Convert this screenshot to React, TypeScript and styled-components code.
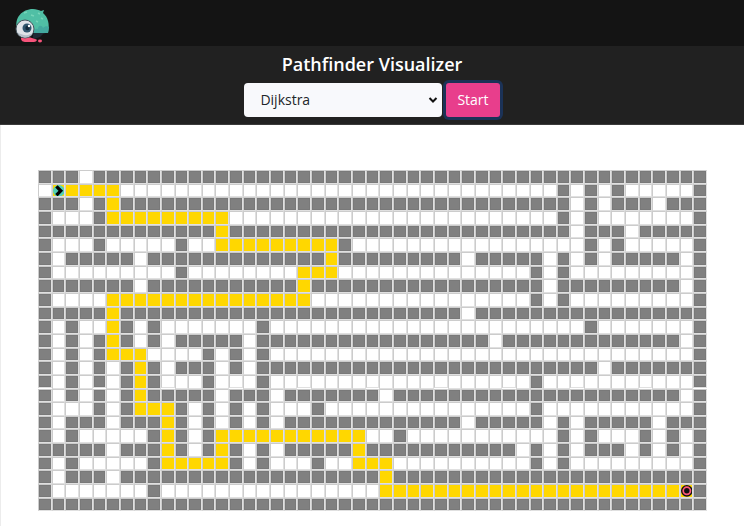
import React from "react";
import styled, { createGlobalStyle } from "styled-components";

const GlobalStyle = createGlobalStyle`
  * { box-sizing: border-box; }
  body {
    margin: 0;
    background: #fff;
    font-family: "Open Sans", "Noto Sans", sans-serif;
  }
`;

type CellKind = "#" | "." | "*" | "S" | "E";

/* Each row is a list of runs: a cell kind followed by how many cells it spans. */
const MAZE = [
  "#3 .1 #45",
  ".1 S1 *4 .32 #1 .1 #1 .1 #1 .5 #1",
  "#3 .1 #1 *1 #33 .1 #1 .1 #3 .1 #3",
  "#1 .3 #1 *9 .24 #1 .1 #1 .7 #1",
  "#13 *1 #25 .1 #3 .1 #5",
  "#1 .3 #1 .5 #1 .2 *9 #1 .17 #1 .1 #1 .5 #1",
  "#1 .1 #5 .1 #13 *1 #9 .1 #5 .1 #1 .1 #1 .1 #5 .1 #1",
  "#1 .9 #1 .8 *3 .14 #1 .1 #1 .9 #1",
  "#7 .1 #11 *1 #17 .1 #9 .1 #1",
  "#1 .4 *15 .16 #1 .1 #1 .9 #1",
  "#5 *1 #25 .1 #17",
  "#1 .1 #1 .2 *1 #1 .1 #1 .7 #1 .23 #1 .7 #1",
  "#1 .1 #1 .1 #1 *1 #1 .1 #1 .1 #5 .1 #17 .1 #13 .1 #1",
  "#1 .1 #1 .1 #1 *3 .4 #1 .1 #1 .1 #1 .31 #1",
  "#1 .1 #1 .1 #1 .1 #1 *1 #1 .1 #3 .1 #1 .1 #25 .1 #7",
  "#1 .1 #1 .1 #1 .1 #1 *1 #1 .3 #1 .3 #1 .19 #1 .11 #1",
  "#1 .1 #1 .1 #1 .1 #1 *1 #5 .1 #3 .1 #7 .1 #21 .1 #1",
  "#1 .3 #1 .1 #1 *3 #1 .1 #1 .1 #1 .1 #1 .3 #1 .15 #1 .11 #1",
  "#1 .1 #3 .1 #3 *1 #1 .1 #1 .1 #1 .1 #1 .1 #13 .1 #5 .1 #1 .1 #5 .1 #3",
  "#1 .1 #1 .5 #1 *1 #1 .1 #1 *11 .2 #1 .11 #1 .1 #1 .3 #1 .1 #1 .1 #1",
  "#5 .1 #3 *1 #1 .1 #1 *1 #1 .1 #1 .1 #5 *1 #11 .1 #1 .1 #1 .1 #3 .1 #1 .1 #1 .1 #1",
  "#1 .1 #1 .5 #1 *5 #1 .1 #1 .3 #1 .2 *3 .10 #1 .1 #1 .9 #1",
  "#1 .1 #3 .1 #19 *1 #23",
  "#1 .7 #1 .16 *22 E1 #1",
  "#49",
];

const rows: CellKind[][] = MAZE.map((row) =>
  row.split(" ").flatMap((run) => Array<CellKind>(Number(run.slice(1))).fill(run[0] as CellKind))
);

const NavBar = styled.nav`
  display: flex;
  align-items: flex-start;
  height: 46px;
  padding: 6px 14px 0;
  background: #141414;
`;

const LogoLink = styled.a`
  display: block;
  height: 38px;
`;

const Toolbar = styled.header`
  display: flex;
  flex-direction: column;
  align-items: center;
  gap: 6px;
  padding: 5px 0 7px;
  background: #212121;
  border-bottom: 1px solid #3a3a3a;
`;

const Title = styled.h1`
  margin: 0;
  color: #fff;
  font-size: 18px;
  line-height: 26px;
  font-weight: 600;
`;

const Controls = styled.form`
  display: flex;
  align-items: center;
  gap: 4px;
`;

const SelectWrap = styled.label`
  position: relative;
  display: block;
`;

const AlgorithmSelect = styled.select`
  appearance: none;
  width: 198px;
  height: 34px;
  padding: 0 16px;
  border: 0;
  border-radius: 4px;
  background: #f8f9fc;
  color: #212529;
  font: 14px/20px "Open Sans", "Noto Sans", sans-serif;
`;

const Chevron = styled.svg`
  position: absolute;
  right: 4px;
  top: 12px;
  pointer-events: none;
`;

const StartButton = styled.button`
  height: 34px;
  padding: 0 11px;
  border: 0;
  border-radius: 3px;
  background: #e83e8c;
  color: #fff;
  font: 14px/20px "Open Sans", "Noto Sans", sans-serif;
  box-shadow: 0 0 0 3px #1b3257;
`;

const Board = styled.main`
  padding: 45px 37px 15px;
  border-left: 1px solid #ececec;
`;

const Grid = styled.div`
  display: grid;
  grid-template-columns: repeat(49, 1fr);
`;

const fills: Record<CellKind, string> = {
  "#": "#808080",
  ".": "#ffffff",
  "*": "#ffd700",
  S: "#ffd700",
  E: "#ffd700",
};

const Cell = styled.div<{ $kind: CellKind }>`
  display: flex;
  aspect-ratio: 1;
  min-width: 0;
  background: ${(p) => fills[p.$kind]};
  border: 1px solid;
  border-color: #cccccc #e0e0e0 #e0e0e0 #cccccc;
  box-shadow: ${(p) => (p.$kind === "#" ? "inset 0 0 0 1px #797979" : "none")};

  svg {
    width: 100%;
    height: 100%;
  }
`;

function Logo() {
  return (
    <svg width="38" height="38" viewBox="0 0 38 38" aria-hidden="true">
      <path d="M20 33c-2-2-1-7 2-7h12l-5 2-3 3z" fill="#202a35" />
      <path d="M7 32c4-2 9-1 14 1 3 0 2 3-1 3h-8c-3 0-5-1-5-4z" fill="#f7547b" />
      <ellipse cx="26" cy="35" rx="2" ry="1.4" fill="#f7547b" />
      <path d="M3 23C0 12 8 3 19 3c3 0 6 1 8 2l3-1-1 3c5 4 7 11 5 20H21z" fill="#50bfa5" />
      <path d="M20 27c0-4 2-5 4-4 0-4 4-4 5-1 2-2 4-2 6-1l-1 6z" fill="#43a99f" />
      <path d="M10 7l3-1M17 9l3 1M24 7l2 1M27 12l2 1M22 15l2 1" stroke="#75d4b8" strokeWidth="1.5" />
      <circle cx="11" cy="23" r="9" fill="#dfe3e8" stroke="#46545d" />
      <path d="M3 26a9 9 0 0 0 16 1c-5 3-10 3-16-1z" fill="#b7c0ca" />
      <circle cx="13" cy="22" r="4.5" fill="#31566d" />
      <circle cx="13.5" cy="22" r="2.2" fill="#142b3d" />
      <circle cx="15" cy="20" r="1.2" fill="#fff" />
    </svg>
  );
}

function StartMarker() {
  return (
    <svg viewBox="0 0 12 12" role="img" aria-label="Start node">
      <circle cx="6" cy="6" r="6" fill="#50d0b5" />
      <path d="M3.5 1.5 8 6 3.5 10.5" fill="none" stroke="#000" strokeWidth="3.4" />
    </svg>
  );
}

function EndMarker() {
  return (
    <svg viewBox="0 0 12 12" role="img" aria-label="End node">
      <circle cx="6" cy="6" r="5.3" fill="#ff5778" stroke="#111" strokeWidth="1.4" />
      <circle cx="6" cy="6" r="2.8" fill="#111" />
    </svg>
  );
}

export default function App() {
  return (
    <>
      <GlobalStyle />
      <NavBar>
        <LogoLink href="#" aria-label="Home">
          <Logo />
        </LogoLink>
      </NavBar>
      <Toolbar>
        <Title>Pathfinder Visualizer</Title>
        <Controls>
          <SelectWrap>
            <AlgorithmSelect aria-label="Algorithm">
              <option>Dijkstra</option>
            </AlgorithmSelect>
            <Chevron width="10" height="10" viewBox="0 0 10 10">
              <path d="M1.5 3 5 6.5 8.5 3" fill="none" stroke="#111" strokeWidth="2" />
            </Chevron>
          </SelectWrap>
          <StartButton type="button">Start</StartButton>
        </Controls>
      </Toolbar>
      <Board>
        <Grid>
          {rows.flatMap((row, y) =>
            row.map((kind, x) => (
              <Cell key={`${y}-${x}`} $kind={kind}>
                {kind === "S" && <StartMarker />}
                {kind === "E" && <EndMarker />}
              </Cell>
            ))
          )}
        </Grid>
      </Board>
    </>
  );
}
